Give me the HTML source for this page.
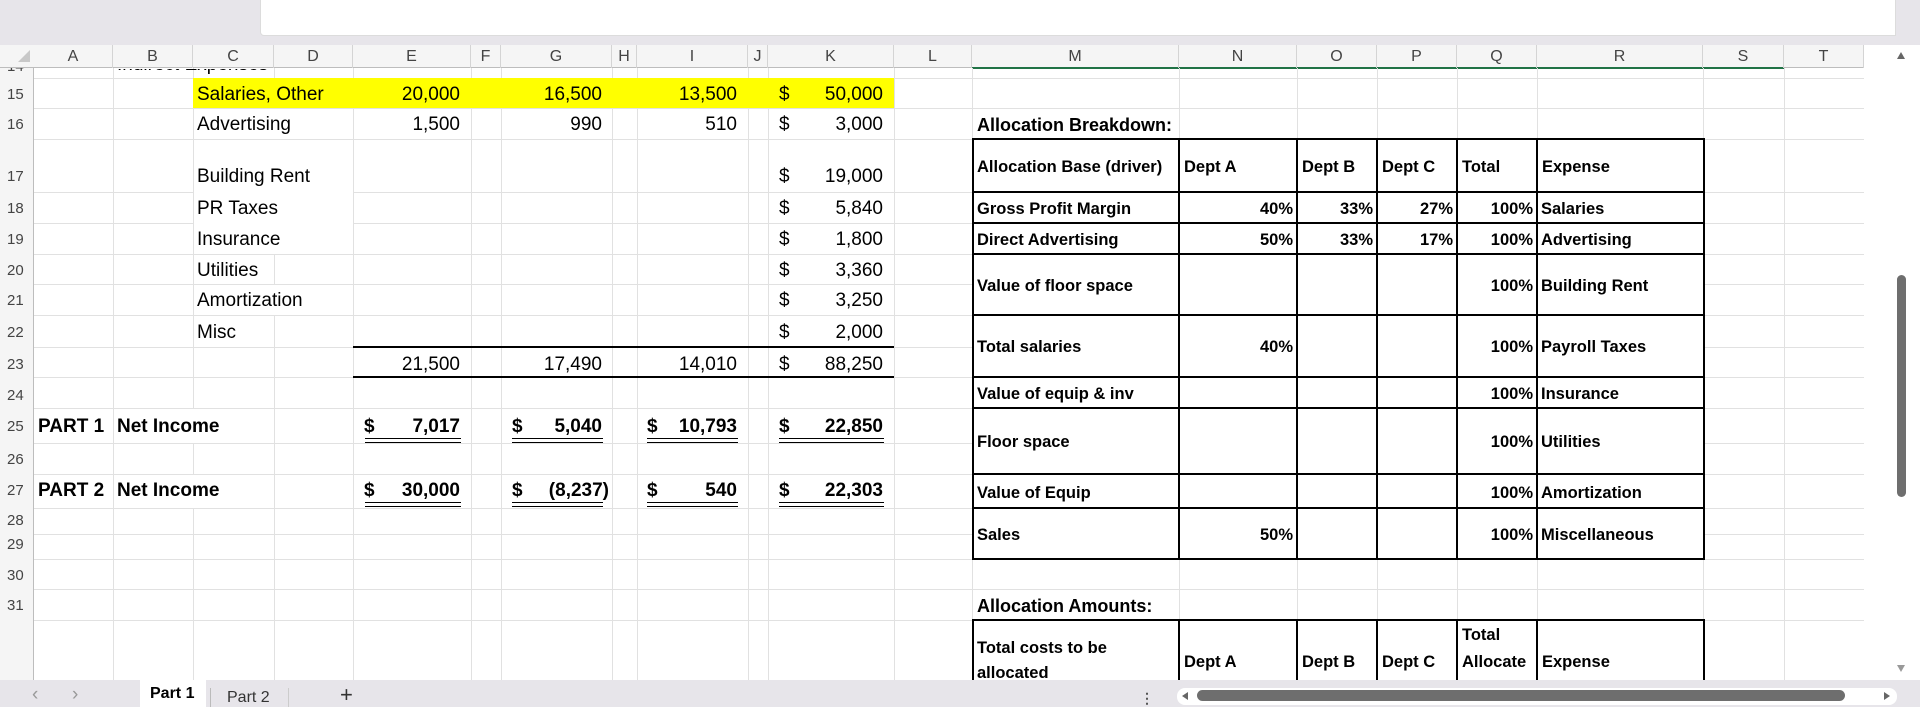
<!DOCTYPE html>
<html><head><meta charset="utf-8"><style>
*{margin:0;padding:0;box-sizing:border-box}
body{width:1920px;height:707px;overflow:hidden;background:#fff;font-family:"Liberation Sans",Arial,sans-serif;position:relative;color:#000}
.a{position:absolute}
.h{position:absolute;left:34px;width:1830px;height:1px;background:#e1e1e1}
.v{position:absolute;top:68px;height:612px;width:1px;background:#e1e1e1}
.t{position:absolute;height:20px;line-height:20px;font-size:19px;white-space:nowrap}
.r{text-align:right}
.b{font-weight:bold}
.s{font-size:16.5px;font-weight:bold}
.rn{position:absolute;left:0;width:30px;padding-left:7px;font-size:15px;color:#444;height:16px;line-height:16px}
.ch{position:absolute;top:45px;height:23px;line-height:23px;text-align:center;font-size:16px;color:#444;border-right:1px solid #d4d4d4}
.bk{position:absolute;background:#000}
.du{position:absolute;height:5px;border-top:1.5px solid #000;border-bottom:1.5px solid #000}
</style></head><body>
<div class="a" style="left:0;top:0;width:1920px;height:45px;background:#e7e5ea"></div>
<div class="a" style="left:260px;top:0;width:1636px;height:36px;background:#fff;border-bottom-left-radius:4px;border:1px solid #dcdcdc;border-top:none"></div>
<div class="a" style="left:0;top:45px;width:1864px;height:23px;background:#f5f5f5;border-bottom:1px solid #bdbdbd"></div>
<div class="a" style="left:0;top:68px;width:34px;height:612px;background:#f5f5f5;border-right:1px solid #bdbdbd"></div>
<div class="a" style="left:972px;top:67px;width:812px;height:2px;background:#217346"></div>
<div class="a" style="left:18px;top:50px;width:0;height:0;border-left:12px solid transparent;border-bottom:12px solid #c8c8c8"></div>
<div class="ch" style="left:34px;width:79px">A</div>
<div class="ch" style="left:113px;width:80px">B</div>
<div class="ch" style="left:193px;width:81px">C</div>
<div class="ch" style="left:274px;width:79px">D</div>
<div class="ch" style="left:353px;width:118px">E</div>
<div class="ch" style="left:471px;width:30px">F</div>
<div class="ch" style="left:501px;width:111px">G</div>
<div class="ch" style="left:612px;width:25px">H</div>
<div class="ch" style="left:637px;width:111px">I</div>
<div class="ch" style="left:748px;width:20px">J</div>
<div class="ch" style="left:768px;width:126px">K</div>
<div class="ch" style="left:894px;width:78px">L</div>
<div class="ch" style="left:972px;width:207px">M</div>
<div class="ch" style="left:1179px;width:118px">N</div>
<div class="ch" style="left:1297px;width:80px">O</div>
<div class="ch" style="left:1377px;width:80px">P</div>
<div class="ch" style="left:1457px;width:80px">Q</div>
<div class="ch" style="left:1537px;width:166px">R</div>
<div class="ch" style="left:1703px;width:81px">S</div>
<div class="ch" style="left:1784px;width:80px">T</div>
<div class="h" style="top:78px"></div><div class="h" style="top:108px"></div><div class="h" style="top:139px"></div><div class="h" style="top:192px"></div><div class="h" style="top:223px"></div><div class="h" style="top:254px"></div><div class="h" style="top:284px"></div><div class="h" style="top:315px"></div><div class="h" style="top:347px"></div><div class="h" style="top:377px"></div><div class="h" style="top:408px"></div><div class="h" style="top:443px"></div><div class="h" style="top:474px"></div><div class="h" style="top:508px"></div><div class="h" style="top:534px"></div><div class="h" style="top:559px"></div><div class="h" style="top:589px"></div><div class="h" style="top:620px"></div>
<div class="v" style="left:113px"></div><div class="v" style="left:193px"></div><div class="v" style="left:274px"></div><div class="v" style="left:353px"></div><div class="v" style="left:471px"></div><div class="v" style="left:501px"></div><div class="v" style="left:612px"></div><div class="v" style="left:637px"></div><div class="v" style="left:748px"></div><div class="v" style="left:768px"></div><div class="v" style="left:894px"></div><div class="v" style="left:972px"></div><div class="v" style="left:1179px"></div><div class="v" style="left:1297px"></div><div class="v" style="left:1377px"></div><div class="v" style="left:1457px"></div><div class="v" style="left:1537px"></div><div class="v" style="left:1703px"></div><div class="v" style="left:1784px"></div><div class="v" style="left:1864px"></div>
<div class="a" style="left:193px;top:78px;width:701px;height:30px;background:#ffff00"></div>
<div class="a" style="left:194px;top:109px;width:159px;height:30px;background:#fff"></div>
<div class="a" style="left:194px;top:140px;width:159px;height:114px;background:#fff"></div>
<div class="a" style="left:194px;top:285px;width:159px;height:30px;background:#fff"></div>
<div class="a" style="left:114px;top:409px;width:159px;height:34px;background:#fff"></div>
<div class="a" style="left:114px;top:475px;width:159px;height:33px;background:#fff"></div>
<div class="a" style="left:0;top:68px;width:34px;height:10px;overflow:hidden"><div class="rn" style="top:-9px">14</div></div>
<div class="rn" style="top:87px">15</div><div class="rn" style="top:117px">16</div><div class="rn" style="top:169px">17</div><div class="rn" style="top:201px">18</div><div class="rn" style="top:232px">19</div><div class="rn" style="top:263px">20</div><div class="rn" style="top:293px">21</div><div class="rn" style="top:325px">22</div><div class="rn" style="top:357px">23</div><div class="rn" style="top:388px">24</div><div class="rn" style="top:419px">25</div><div class="rn" style="top:452px">26</div><div class="rn" style="top:483px">27</div><div class="rn" style="top:513px">28</div><div class="rn" style="top:537px">29</div><div class="rn" style="top:568px">30</div><div class="rn" style="top:598px">31</div>
<div class="a" style="left:113px;top:69px;width:300px;height:9px;overflow:hidden"><div class="t" style="left:4px;top:-14px">Indirect Expenses</div></div>
<div class="t" style="left:197px;top:85px">Salaries, Other</div>
<div class="t r" style="left:353px;width:107px;top:85px">20,000</div>
<div class="t r" style="left:501px;width:101px;top:85px">16,500</div>
<div class="t r" style="left:637px;width:100px;top:85px">13,500</div>
<div class="t" style="left:779px;top:85px">$</div><div class="t r" style="left:800px;width:83px;top:85px">50,000</div>
<div class="t" style="left:197px;top:115px">Advertising</div>
<div class="t r" style="left:353px;width:107px;top:115px">1,500</div>
<div class="t r" style="left:501px;width:101px;top:115px">990</div>
<div class="t r" style="left:637px;width:100px;top:115px">510</div>
<div class="t" style="left:779px;top:115px">$</div><div class="t r" style="left:800px;width:83px;top:115px">3,000</div>
<div class="t" style="left:197px;top:167px">Building Rent</div>
<div class="t" style="left:779px;top:167px">$</div><div class="t r" style="left:800px;width:83px;top:167px">19,000</div>
<div class="t" style="left:197px;top:199px">PR Taxes</div>
<div class="t" style="left:779px;top:199px">$</div><div class="t r" style="left:800px;width:83px;top:199px">5,840</div>
<div class="t" style="left:197px;top:230px">Insurance</div>
<div class="t" style="left:779px;top:230px">$</div><div class="t r" style="left:800px;width:83px;top:230px">1,800</div>
<div class="t" style="left:197px;top:261px">Utilities</div>
<div class="t" style="left:779px;top:261px">$</div><div class="t r" style="left:800px;width:83px;top:261px">3,360</div>
<div class="t" style="left:197px;top:291px">Amortization</div>
<div class="t" style="left:779px;top:291px">$</div><div class="t r" style="left:800px;width:83px;top:291px">3,250</div>
<div class="t" style="left:197px;top:323px">Misc</div>
<div class="t" style="left:779px;top:323px">$</div><div class="t r" style="left:800px;width:83px;top:323px">2,000</div>
<div class="bk" style="left:353px;top:346px;width:541px;height:2px"></div>
<div class="t r" style="left:353px;width:107px;top:355px">21,500</div>
<div class="t r" style="left:501px;width:101px;top:355px">17,490</div>
<div class="t r" style="left:637px;width:100px;top:355px">14,010</div>
<div class="t" style="left:779px;top:355px">$</div><div class="t r" style="left:800px;width:83px;top:355px">88,250</div>
<div class="bk" style="left:353px;top:376px;width:541px;height:2px"></div>
<div class="t b" style="left:38px;top:417px">PART 1</div><div class="t b" style="left:117px;top:417px">Net Income</div>
<div class="t b" style="left:364px;top:417px">$</div><div class="t b r" style="left:380px;width:80px;top:417px">7,017</div>
<div class="t b" style="left:512px;top:417px">$</div><div class="t b r" style="left:530px;width:72px;top:417px">5,040</div>
<div class="t b" style="left:647px;top:417px">$</div><div class="t b r" style="left:660px;width:77px;top:417px">10,793</div>
<div class="t b" style="left:779px;top:417px">$</div><div class="t b r" style="left:800px;width:83px;top:417px">22,850</div>
<div class="du" style="left:365px;width:96px;top:438px"></div>
<div class="du" style="left:512px;width:91px;top:438px"></div>
<div class="du" style="left:647px;width:91px;top:438px"></div>
<div class="du" style="left:779px;width:105px;top:438px"></div>
<div class="t b" style="left:38px;top:481px">PART 2</div><div class="t b" style="left:117px;top:481px">Net Income</div>
<div class="t b" style="left:364px;top:481px">$</div><div class="t b r" style="left:380px;width:80px;top:481px">30,000</div>
<div class="t b" style="left:512px;top:481px">$</div><div class="t b r" style="left:530px;width:79px;top:481px">(8,237)</div>
<div class="t b" style="left:647px;top:481px">$</div><div class="t b r" style="left:660px;width:77px;top:481px">540</div>
<div class="t b" style="left:779px;top:481px">$</div><div class="t b r" style="left:800px;width:83px;top:481px">22,303</div>
<div class="du" style="left:365px;width:96px;top:502px"></div>
<div class="du" style="left:512px;width:91px;top:502px"></div>
<div class="du" style="left:647px;width:91px;top:502px"></div>
<div class="du" style="left:779px;width:105px;top:502px"></div>
<div class="a" style="left:972px;top:139px;width:731px;height:420px;background:#fff"></div>
<div class="t b" style="left:977px;top:115px;font-size:18px">Allocation Breakdown:</div>
<div class="bk" style="left:972px;top:138px;width:733px;height:2px"></div>
<div class="bk" style="left:972px;top:191px;width:733px;height:2px"></div>
<div class="bk" style="left:972px;top:222px;width:733px;height:2px"></div>
<div class="bk" style="left:972px;top:253px;width:733px;height:2px"></div>
<div class="bk" style="left:972px;top:314px;width:733px;height:2px"></div>
<div class="bk" style="left:972px;top:376px;width:733px;height:2px"></div>
<div class="bk" style="left:972px;top:407px;width:733px;height:2px"></div>
<div class="bk" style="left:972px;top:473px;width:733px;height:2px"></div>
<div class="bk" style="left:972px;top:507px;width:733px;height:2px"></div>
<div class="bk" style="left:972px;top:558px;width:733px;height:2px"></div>
<div class="bk" style="left:972px;top:138px;width:2px;height:422px"></div>
<div class="bk" style="left:1178px;top:138px;width:2px;height:422px"></div>
<div class="bk" style="left:1296px;top:138px;width:2px;height:422px"></div>
<div class="bk" style="left:1376px;top:138px;width:2px;height:422px"></div>
<div class="bk" style="left:1456px;top:138px;width:2px;height:422px"></div>
<div class="bk" style="left:1536px;top:138px;width:2px;height:422px"></div>
<div class="bk" style="left:1703px;top:138px;width:2px;height:422px"></div>
<div class="t s" style="left:977px;top:157px">Allocation Base (driver)</div>
<div class="t s" style="left:1184px;top:157px">Dept A</div>
<div class="t s" style="left:1302px;top:157px">Dept B</div>
<div class="t s" style="left:1382px;top:157px">Dept C</div>
<div class="t s" style="left:1462px;top:157px">Total</div>
<div class="t s" style="left:1542px;top:157px">Expense</div>
<div class="t s" style="left:977px;top:199px">Gross Profit Margin</div>
<div class="t s r" style="left:1180px;width:113px;top:199px">40%</div>
<div class="t s r" style="left:1298px;width:75px;top:199px">33%</div>
<div class="t s r" style="left:1378px;width:75px;top:199px">27%</div>
<div class="t s r" style="left:1458px;width:75px;top:199px">100%</div>
<div class="t s" style="left:1541px;top:199px">Salaries</div>
<div class="t s" style="left:977px;top:230px">Direct Advertising</div>
<div class="t s r" style="left:1180px;width:113px;top:230px">50%</div>
<div class="t s r" style="left:1298px;width:75px;top:230px">33%</div>
<div class="t s r" style="left:1378px;width:75px;top:230px">17%</div>
<div class="t s r" style="left:1458px;width:75px;top:230px">100%</div>
<div class="t s" style="left:1541px;top:230px">Advertising</div>
<div class="t s" style="left:977px;top:276px">Value of floor space</div>
<div class="t s r" style="left:1458px;width:75px;top:276px">100%</div>
<div class="t s" style="left:1541px;top:276px">Building Rent</div>
<div class="t s" style="left:977px;top:337px">Total salaries</div>
<div class="t s r" style="left:1180px;width:113px;top:337px">40%</div>
<div class="t s r" style="left:1458px;width:75px;top:337px">100%</div>
<div class="t s" style="left:1541px;top:337px">Payroll Taxes</div>
<div class="t s" style="left:977px;top:384px">Value of equip &amp; inv</div>
<div class="t s r" style="left:1458px;width:75px;top:384px">100%</div>
<div class="t s" style="left:1541px;top:384px">Insurance</div>
<div class="t s" style="left:977px;top:432px">Floor space</div>
<div class="t s r" style="left:1458px;width:75px;top:432px">100%</div>
<div class="t s" style="left:1541px;top:432px">Utilities</div>
<div class="t s" style="left:977px;top:483px">Value of Equip</div>
<div class="t s r" style="left:1458px;width:75px;top:483px">100%</div>
<div class="t s" style="left:1541px;top:483px">Amortization</div>
<div class="t s" style="left:977px;top:525px">Sales</div>
<div class="t s r" style="left:1180px;width:113px;top:525px">50%</div>
<div class="t s r" style="left:1458px;width:75px;top:525px">100%</div>
<div class="t s" style="left:1541px;top:525px">Miscellaneous</div>
<div class="t b" style="left:977px;top:596px;font-size:18px">Allocation Amounts:</div>
<div class="a" style="left:972px;top:620px;width:731px;height:60px;background:#fff"></div>
<div class="bk" style="left:972px;top:619px;width:733px;height:2px"></div>
<div class="bk" style="left:972px;top:619px;width:2px;height:61px"></div>
<div class="bk" style="left:1178px;top:619px;width:2px;height:61px"></div>
<div class="bk" style="left:1296px;top:619px;width:2px;height:61px"></div>
<div class="bk" style="left:1376px;top:619px;width:2px;height:61px"></div>
<div class="bk" style="left:1456px;top:619px;width:2px;height:61px"></div>
<div class="bk" style="left:1536px;top:619px;width:2px;height:61px"></div>
<div class="bk" style="left:1703px;top:619px;width:2px;height:61px"></div>
<div class="t s" style="left:977px;top:638px">Total costs to be</div>
<div class="a" style="left:974px;top:660px;width:200px;height:20px;overflow:hidden"><div class="t s" style="left:3px;top:3px">allocated</div></div>
<div class="t s" style="left:1184px;top:652px">Dept A</div>
<div class="t s" style="left:1302px;top:652px">Dept B</div>
<div class="t s" style="left:1382px;top:652px">Dept C</div>
<div class="t s" style="left:1462px;top:625px">Total</div>
<div class="t s" style="left:1462px;top:652px">Allocate</div>
<div class="t s" style="left:1542px;top:652px">Expense</div>
<div class="a" style="left:1864px;top:45px;width:56px;height:635px;background:#fff"></div>
<div class="a" style="left:1897px;top:275px;width:9px;height:222px;background:#6e6e6e;border-radius:5px"></div>
<div class="a" style="left:1897px;top:52px;width:0;height:0;border-left:4px solid transparent;border-right:4px solid transparent;border-bottom:7px solid #666"></div>
<div class="a" style="left:1897px;top:665px;width:0;height:0;border-left:4px solid transparent;border-right:4px solid transparent;border-top:7px solid #999"></div>
<div class="a" style="left:0;top:680px;width:1920px;height:27px;background:#e7e5ea"></div>
<div class="a" style="left:140px;top:680px;width:66px;height:27px;background:#fff"></div>
<div class="a" style="left:32px;top:684px;font-size:19px;color:#999">&lsaquo;</div>
<div class="a" style="left:72px;top:684px;font-size:19px;color:#999">&rsaquo;</div>
<div class="a" style="left:150px;top:685px;font-size:16px;font-weight:bold">Part 1</div>
<div class="a" style="left:210px;top:688px;width:1px;height:19px;background:#bbb"></div>
<div class="a" style="left:227px;top:689px;font-size:16px;color:#333">Part 2</div>
<div class="a" style="left:288px;top:688px;width:1px;height:19px;background:#ccc"></div>
<div class="a" style="left:340px;top:682px;font-size:22px;color:#333">+</div>
<div class="a" style="left:1140px;top:690px;font-size:14px;color:#555;font-weight:bold">&#8942;</div>
<div class="a" style="left:1177px;top:688px;width:720px;height:17px;background:#fff;border-radius:8px"></div>
<div class="a" style="left:1182px;top:692px;width:0;height:0;border-top:4px solid transparent;border-bottom:4px solid transparent;border-right:6px solid #666"></div>
<div class="a" style="left:1197px;top:690px;width:648px;height:11px;background:#6e6e6e;border-radius:6px"></div>
<div class="a" style="left:1884px;top:692px;width:0;height:0;border-top:4px solid transparent;border-bottom:4px solid transparent;border-left:6px solid #666"></div>
</body></html>
